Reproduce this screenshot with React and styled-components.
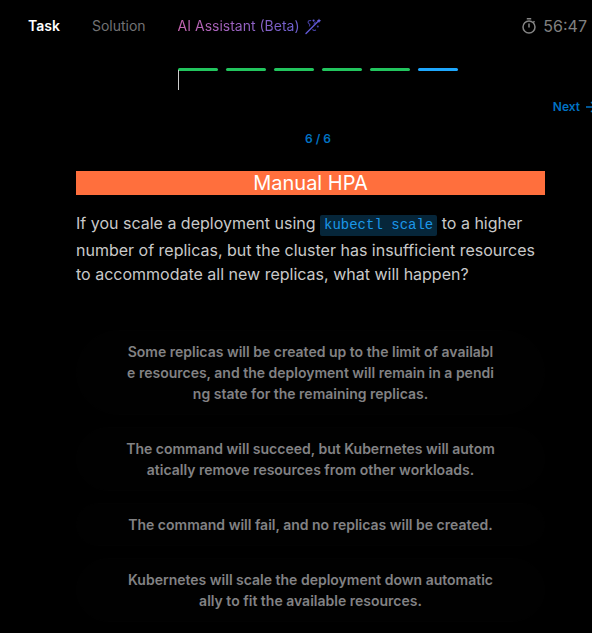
import React, { useState } from "react";
import styled, { createGlobalStyle } from "styled-components";

const GlobalStyle = createGlobalStyle`
  * { box-sizing: border-box; }
  body {
    margin: 0;
    background: #000;
    color: #c9c9c9;
    font-family: Inter, "Liberation Sans", sans-serif;
    overflow: hidden;
  }
  button { font-family: inherit; cursor: pointer; }
`;

const Page = styled.div`
  min-height: 100vh;
  background: #000;
  overflow: hidden;
`;

const TopBar = styled.header`
  display: flex;
  align-items: center;
  justify-content: space-between;
  height: 52px;
  padding: 0 5px 0 12px;
`;

const Tabs = styled.nav`
  display: flex;
`;

const Tab = styled.button`
  display: flex;
  align-items: center;
  gap: 5px;
  border: 0;
  padding: 0 16px;
  background: none;
  font-size: 14px;
  line-height: 20px;
  font-weight: ${(p) => (p.$active ? 600 : 400)};
  color: ${(p) => (p.$active ? "#fff" : "#727274")};
`;

const GradientText = styled.span`
  background: linear-gradient(90deg, #c765b2, #6a5fd0);
  background-clip: text;
  color: transparent;
`;

const Timer = styled.div`
  display: flex;
  align-items: center;
  gap: 6px;
  font-size: 16px;
  line-height: 24px;
  color: #808080;
`;

const Stepper = styled.section`
  display: flex;
  flex-direction: column;
  align-items: center;
  margin: 16px -8px 0 36px;
`;

const Steps = styled.div`
  position: relative;
  display: flex;
  gap: 8px;
`;

const Step = styled.span`
  width: 40px;
  height: 3px;
  border-radius: 2px;
  background: ${(p) => (p.$current ? "#1ea7fd" : "#22c55e")};
`;

const Caret = styled.span`
  position: absolute;
  top: 2px;
  left: 0;
  width: 1px;
  height: 20px;
  background: #ccc;
`;

const NextButton = styled.button`
  display: flex;
  align-items: center;
  gap: 4px;
  align-self: flex-end;
  margin-top: 28px;
  border: 0;
  padding: 0;
  background: none;
  color: #0072c3;
  font-size: 12px;
  line-height: 16px;
  font-weight: 600;
`;

const Count = styled.p`
  margin: 16px 0 0;
  color: #0072c3;
  font-size: 12px;
  line-height: 16px;
  font-weight: 600;
`;

const Content = styled.main`
  margin: 24px 47px 0 76px;
`;

const Title = styled.h1`
  margin: 0;
  background: #ff6f3d;
  color: #fff;
  font-size: 20px;
  line-height: 24px;
  font-weight: 400;
  text-align: center;
`;

const Question = styled.p`
  margin: 16px 0 0;
  font-size: 16px;
  line-height: 24px;
`;

const Code = styled.code`
  display: inline-block;
  margin-bottom: 2px;
  padding: 2px 4px;
  border-radius: 2px;
  background: #06263a;
  color: #1b97e8;
  font-family: "Liberation Mono", monospace;
  font-size: 14px;
  line-height: 17px;
`;

const Options = styled.div`
  display: flex;
  flex-direction: column;
  gap: 12px;
  margin: 44px 0 12px;
`;

const Option = styled.button`
  border: 1px solid #020202;
  border-radius: 48px;
  padding: 10px 49px;
  background: #010101;
  color: #828284;
  font-size: 14px;
  line-height: 21px;
  font-weight: 600;
  text-align: center;
  word-break: break-all;
`;

function WandIcon() {
  return (
    <svg width="17" height="17" viewBox="0 0 17 17" fill="none" aria-hidden="true">
      <path d="M1 15.5 13.2 3.2" stroke="#5f57d4" strokeWidth="1.4" strokeLinecap="round" />
      <path d="m14 .6.7 1.5 1.5.6-1.5.7-.7 1.5-.7-1.5-1.5-.7 1.5-.6z" fill="#6a62e0" />
      <circle cx="8.6" cy="2.6" r="1.1" fill="#5f57d4" />
      <circle cx="12.8" cy="8.6" r="1" fill="#453fa0" />
      <path d="M5.8 2.6C3.2 2.2 2.2 4.2 3.9 5.6c1 .8 1.4 1.4.5 2.4M7.8 11.6c.6 1 1.8 1.2 2.8.4M10.2 4l-1.2 2" stroke="#453fa0" strokeWidth="1.1" strokeLinecap="round" />
    </svg>
  );
}

function StopwatchIcon() {
  return (
    <svg width="16" height="18" viewBox="0 0 16 18" fill="none" stroke="#858585" strokeWidth="1.5" aria-hidden="true">
      <circle cx="8" cy="10" r="6" />
      <path d="M5.8 1.8h4.4M8 6.5v4M12.2 5.6l1.3-1.3" />
    </svg>
  );
}

function ArrowIcon() {
  return (
    <svg width="16" height="16" viewBox="0 0 16 16" fill="none" stroke="currentColor" strokeWidth="1.4" aria-hidden="true">
      <path d="M2 8h10M7 3l5 5-5 5" />
    </svg>
  );
}

const steps = [1, 2, 3, 4, 5, 6];

const answers = [
  "Some replicas will be created up to the limit of available resources, and the deployment will remain in a pending state for the remaining replicas.",
  "The command will succeed, but Kubernetes will automatically remove resources from other workloads.",
  "The command will fail, and no replicas will be created.",
  "Kubernetes will scale the deployment down automatically to fit the available resources.",
];

export default function App() {
  const [tab, setTab] = useState("task");
  return (
    <Page>
      <GlobalStyle />
      <TopBar>
        <Tabs>
          <Tab $active={tab === "task"} onClick={() => setTab("task")}>Task</Tab>
          <Tab $active={tab === "solution"} onClick={() => setTab("solution")}>Solution</Tab>
          <Tab $active={tab === "ai"} onClick={() => setTab("ai")}>
            <GradientText>AI Assistant (Beta)</GradientText>
            <WandIcon />
          </Tab>
        </Tabs>
        <Timer>
          <StopwatchIcon />
          <span>56:47</span>
        </Timer>
      </TopBar>
      <Stepper>
        <Steps>
          {steps.map((n) => (
            <Step key={n} $current={n === steps.length} />
          ))}
          <Caret />
        </Steps>
        <NextButton>
          Next
          <ArrowIcon />
        </NextButton>
        <Count>6 / 6</Count>
      </Stepper>
      <Content>
        <Title>Manual HPA</Title>
        <Question>
          If you scale a deployment using <Code>kubectl scale</Code> to a higher number of
          replicas, but the cluster has insufficient resources to accommodate all new replicas,
          what will happen?
        </Question>
        <Options>
          {answers.map((text) => (
            <Option key={text}>{text}</Option>
          ))}
        </Options>
      </Content>
    </Page>
  );
}
